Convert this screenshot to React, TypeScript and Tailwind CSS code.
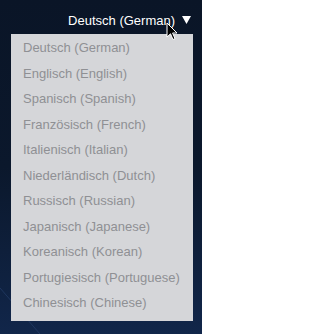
const languages = [
  "Deutsch (German)",
  "Englisch (English)",
  "Spanisch (Spanish)",
  "Französisch (French)",
  "Italienisch (Italian)",
  "Niederländisch (Dutch)",
  "Russisch (Russian)",
  "Japanisch (Japanese)",
  "Koreanisch (Korean)",
  "Portugiesisch (Portuguese)",
  "Chinesisch (Chinese)",
];

export default function App() {
  return (
    <div
      className="relative h-[334px] w-[202px] overflow-hidden bg-gradient-to-b from-[#0a1527] via-[#0b182c] to-[#11264a]"
      style={{ fontFamily: '"Liberation Sans", Arial, sans-serif' }}
    >
      <svg
        className="pointer-events-none absolute bottom-0 left-0"
        width="60"
        height="60"
        viewBox="0 0 60 60"
      >
        <line x1="0" y1="14" x2="40" y2="60" stroke="#2a4470" strokeWidth="1" opacity="0.6" />
      </svg>

      <div className="flex h-[34px] items-start justify-end pr-[11px] pt-[13px]">
        <span className="text-[13px] leading-[15px] text-white">Deutsch (German)</span>
        <svg className="ml-[7px] mt-[3px]" width="9" height="8" viewBox="0 0 9 8">
          <polygon points="0,0 9,0 4.5,8" fill="#ffffff" />
        </svg>
      </div>

      <ul className="relative ml-[11px] mr-[9px] bg-[#d5d6d9] pb-[5px] pt-px">
        {languages.map((lang) => (
          <li
            key={lang}
            className="pl-[12px] text-[13px] leading-[25.5px] whitespace-nowrap text-[#8f9094]"
          >
            {lang}
          </li>
        ))}
      </ul>

      <svg
        className="pointer-events-none absolute left-[166px] top-[22px]"
        width="12"
        height="19"
        viewBox="0 0 12 19"
      >
        <path
          d="M1 1 L1 15 L4.5 11.8 L7 17.5 L9 16.6 L6.6 11 L11 11 Z"
          fill="#000"
          stroke="#fff"
          strokeWidth="1"
          strokeLinejoin="round"
        />
      </svg>
    </div>
  );
}
